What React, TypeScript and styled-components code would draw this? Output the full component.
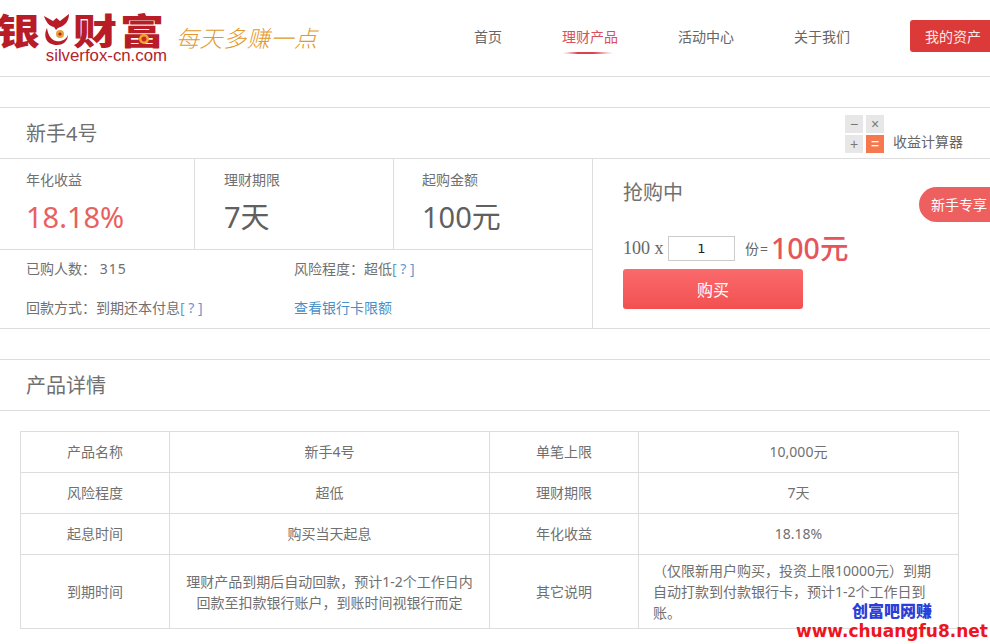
import styled, { createGlobalStyle } from "styled-components";

const sans = `"Noto Sans", "Noto Sans CJK SC", sans-serif`;

const GlobalStyle = createGlobalStyle`
  html, body {
    margin: 0;
    height: 644px;
    overflow: hidden;
    background: #fff;
    font-family: ${sans};
    color: #707070;
  }
`;

const Page = styled.div`
  position: relative;
  width: 990px;
  height: 644px;
  overflow: hidden;
`;

const Header = styled.header`
  display: flex;
  align-items: flex-start;
  height: 76px;
  border-bottom: 1px solid #ddd;
  overflow: hidden;
`;

const Logo = styled.div`
  position: relative;
  flex: none;
  width: 167px;
  margin-top: 10px;
  text-align: right;
`;

const LogoMark = styled.div`
  display: flex;
  align-items: center;
  gap: 3px;
  height: 38px;
  margin-left: -4px;
  color: #b81c26;
`;

const LogoChar = styled.span`
  display: block;
  width: 44px;
  font: 900 44px/38px "Noto Sans CJK SC", sans-serif;
  transform: scaleY(0.82);
`;

const LogoCoin = styled.span`
  position: absolute;
  left: 139px;
  top: 24px;
  width: 10px;
  height: 10px;
  border-radius: 50%;
  background: radial-gradient(circle, #c8282a 0 2px, #f0a52e 3px);
`;

const LogoDomain = styled.div`
  font: 16.8px/15px "Liberation Sans", sans-serif;
  color: #b3232c;
`;

const Slogan = styled.div`
  flex: none;
  margin: 23px 0 0 9px;
  width: 142px;
  font: italic 300 23px/28px "Noto Sans CJK SC", sans-serif;
  letter-spacing: 0.6px;
  color: #e3992a;
  white-space: nowrap;
`;

const Nav = styled.nav`
  display: flex;
  flex: none;
  margin-left: 156px;
  gap: 60px;
  padding-top: 27px;
`;

const NavItem = styled.a<{ $active?: boolean }>`
  position: relative;
  font-size: 14px;
  line-height: 20px;
  white-space: nowrap;
  color: ${(p) => (p.$active ? "#d9505a" : "#666")};
  ${(p) =>
    p.$active &&
    `&::after {
      content: "";
      position: absolute;
      left: 0;
      right: 4px;
      top: 25px;
      height: 2px;
      border-radius: 50%;
      background: linear-gradient(90deg, transparent, #d9434a 30%, #d9434a 60%, transparent);
    }`}
`;

const AssetButton = styled.a`
  flex: none;
  margin: 20px 0 0 60px;
  width: 80px;
  height: 32px;
  box-sizing: border-box;
  padding-left: 15px;
  border-radius: 3px 0 0 3px;
  background: #dc3a38;
  color: #fbecea;
  font-size: 14px;
  line-height: 34px;
  white-space: nowrap;
`;

const TitleBar = styled.div`
  display: flex;
  align-items: flex-start;
  justify-content: space-between;
  height: 50px;
  margin-top: 30px;
  border-top: 1px solid #ddd;
  border-bottom: 1px solid #ddd;
  padding: 0 27px 0 26px;
`;

const SectionTitle = styled.h1`
  margin: 0;
  font-size: 20px;
  line-height: 52px;
  font-weight: 400;
  color: #707070;
`;

const Calculator = styled.div`
  display: flex;
  align-items: flex-end;
  gap: 9px;
  margin-top: 7px;
`;

const CalcKeys = styled.div`
  display: grid;
  grid-template-columns: 18px 18px;
  grid-auto-rows: 18px;
  gap: 2px 3px;
`;

const CalcKey = styled.span<{ $on?: boolean }>`
  display: flex;
  align-items: center;
  justify-content: center;
  background: ${(p) => (p.$on ? "#f5784f" : "#e7e7e7")};
  color: ${(p) => (p.$on ? "#fff" : "#777")};
  font: 14px/18px "Liberation Sans", sans-serif;
`;

const CalcLabel = styled.span`
  font-size: 14px;
  line-height: 20px;
  padding-bottom: 1px;
  color: #666;
`;

const Main = styled.section`
  display: flex;
  height: 169px;
  border-bottom: 1px solid #ddd;
`;

const Info = styled.div`
  width: 592px;
  border-right: 1px solid #ddd;
`;

const Stats = styled.div`
  display: flex;
  height: 90px;
  border-bottom: 1px solid #ddd;
`;

const Stat = styled.div<{ $width: number; $pad: number }>`
  box-sizing: border-box;
  width: ${(p) => p.$width}px;
  padding: 11px 0 0 ${(p) => p.$pad}px;
  & + & {
    border-left: 1px solid #ddd;
  }
`;

const StatLabel = styled.div`
  font-size: 14px;
  line-height: 20px;
  color: #707070;
`;

const StatValue = styled.div<{ $hot?: boolean }>`
  margin-top: 8px;
  font-size: 29px;
  line-height: 38px;
  color: ${(p) => (p.$hot ? "#e8605f" : "#606060")};
`;

const Facts = styled.div`
  display: grid;
  grid-template-columns: 268px 1fr;
  grid-auto-rows: 39px;
  margin-top: -1px;
  padding-left: 26px;
`;

const Fact = styled.div`
  font-size: 14px;
  line-height: 39px;
  white-space: nowrap;
  color: #707070;
`;

const Count = styled.span`
  letter-spacing: 1px;
`;

const Hint = styled.span`
  color: #5b9bd0;
`;

const BankLink = styled.a`
  color: #4a90c8;
`;

const Buy = styled.div`
  position: relative;
  flex: 1;
  padding: 19px 0 0 30px;
`;

const BuyTitle = styled.div`
  font-size: 20px;
  line-height: 30px;
  color: #707070;
`;

const BuyRow = styled.div`
  display: flex;
  align-items: center;
  height: 40px;
  margin-top: 20px;
  color: #666;
`;

const Multiplier = styled.span`
  font: 18px/26px "Liberation Serif", serif;
  width: 45px;
`;

const Quantity = styled.input`
  box-sizing: border-box;
  width: 67px;
  height: 25px;
  border: 1px solid #ccc;
  padding: 0;
  text-align: center;
  font: 13px "DejaVu Sans", sans-serif;
  color: #222;
  outline: none;
`;

const Shares = styled.span`
  margin: 0 2px 0 10px;
  font-size: 14px;
  letter-spacing: 1px;
`;

const Total = styled.span`
  font-size: 28.5px;
  line-height: 38px;
  color: #e4555c;
  font-weight: 500;
`;

const BuyButton = styled.button`
  display: block;
  width: 180px;
  height: 40px;
  margin-top: 1px;
  border: 0;
  border-radius: 3px;
  background: linear-gradient(#fb6a6c, #f25051);
  color: #fff;
  font-family: ${sans};
  font-size: 16px;
`;

const NewbieTag = styled.div`
  position: absolute;
  top: 28px;
  right: 0;
  width: 71px;
  height: 35px;
  box-sizing: border-box;
  padding-left: 12px;
  border-radius: 18px 0 0 18px;
  background: #ee5f5f;
  color: #fff;
  font-size: 14px;
  line-height: 36px;
  white-space: nowrap;
`;

const DetailTitle = styled.div`
  height: 50px;
  margin-top: 30px;
  padding-left: 26px;
  border-top: 1px solid #ddd;
  border-bottom: 1px solid #ddd;
`;

const Table = styled.table`
  border-collapse: collapse;
  table-layout: fixed;
  width: 939px;
  margin: 20px 0 0 20px;
  font-size: 14px;
  color: #707070;
`;

const Cell = styled.td`
  border: 1px solid #ddd;
  text-align: center;
  height: 41px;
  padding: 0 0 1px;
  box-sizing: border-box;
  line-height: 21px;
`;

const LongCell = styled(Cell)`
  height: 74px;
  padding: 0 14px;
`;

const LeftCell = styled(LongCell)`
  text-align: left;
  padding: 0 24px 0 14px;
`;

const Watermark = styled.div`
  position: absolute;
  right: 0;
  top: 600px;
  width: 200px;
  text-align: right;
  white-space: nowrap;
`;

const WatermarkCn = styled.div`
  margin-right: 58px;
  font: 900 16px/20px "Noto Sans CJK SC", sans-serif;
  color: #2a3fd8;
`;

const WatermarkUrl = styled.div`
  margin-top: 2px;
  padding-right: 2px;
  font: 700 17px/19px "DejaVu Sans", sans-serif;
  color: #ee1520;
`;

const FoxIcon = () => (
  <svg width="27" height="33" viewBox="0 0 27 33" fill="none">
    <path d="M1 3 L10 8 L13.5 5 L17 8 L26 1 C26 8 22 13 15 15 L13 17 L11 14 C6 13 3 9 1 3Z" fill="#b81c26" />
    <path d="M4 15 C0 23 3 32 14 32 C21 32 25 27 25 22 C23 27 18 29 13 28 C8 27 5 22 4 15Z" fill="#b81c26" />
    <circle cx="17" cy="21" r="4" fill="#e9a13a" />
    <circle cx="17" cy="21" r="1.6" fill="#b81c26" />
  </svg>
);

export default function App() {
  return (
    <Page>
      <GlobalStyle />
      <Header>
        <Logo>
          <LogoMark>
            <LogoChar>银</LogoChar>
            <FoxIcon />
            <LogoChar>财</LogoChar>
            <LogoChar>富</LogoChar>
          </LogoMark>
          <LogoCoin />
          <LogoDomain>silverfox-cn.com</LogoDomain>
        </Logo>
        <Slogan>每天多赚一点</Slogan>
        <Nav>
          <NavItem>首页</NavItem>
          <NavItem $active>理财产品</NavItem>
          <NavItem>活动中心</NavItem>
          <NavItem>关于我们</NavItem>
        </Nav>
        <AssetButton>我的资产</AssetButton>
      </Header>

      <TitleBar>
        <SectionTitle>新手4号</SectionTitle>
        <Calculator>
          <CalcKeys>
            <CalcKey>−</CalcKey>
            <CalcKey>×</CalcKey>
            <CalcKey>+</CalcKey>
            <CalcKey $on>=</CalcKey>
          </CalcKeys>
          <CalcLabel>收益计算器</CalcLabel>
        </Calculator>
      </TitleBar>

      <Main>
        <Info>
          <Stats>
            <Stat $width={194} $pad={26}>
              <StatLabel>年化收益</StatLabel>
              <StatValue $hot>18.18%</StatValue>
            </Stat>
            <Stat $width={199} $pad={29}>
              <StatLabel>理财期限</StatLabel>
              <StatValue>7天</StatValue>
            </Stat>
            <Stat $width={199} $pad={28}>
              <StatLabel>起购金额</StatLabel>
              <StatValue>100元</StatValue>
            </Stat>
          </Stats>
          <Facts>
            <Fact>已购人数： <Count>315</Count></Fact>
            <Fact>风险程度：超低<Hint>[ ? ]</Hint></Fact>
            <Fact>回款方式：到期还本付息<Hint>[ ? ]</Hint></Fact>
            <Fact><BankLink>查看银行卡限额</BankLink></Fact>
          </Facts>
        </Info>
        <Buy>
          <BuyTitle>抢购中</BuyTitle>
          <BuyRow>
            <Multiplier>100 x</Multiplier>
            <Quantity defaultValue="1" />
            <Shares>份=</Shares>
            <Total>100元</Total>
          </BuyRow>
          <BuyButton>购买</BuyButton>
          <NewbieTag>新手专享</NewbieTag>
        </Buy>
      </Main>

      <DetailTitle>
        <SectionTitle>产品详情</SectionTitle>
      </DetailTitle>

      <Table>
        <colgroup>
          <col width="149" />
          <col width="320" />
          <col width="149" />
          <col width="320" />
        </colgroup>
        <tbody>
          <tr>
            <Cell>产品名称</Cell>
            <Cell>新手4号</Cell>
            <Cell>单笔上限</Cell>
            <Cell>10,000元</Cell>
          </tr>
          <tr>
            <Cell>风险程度</Cell>
            <Cell>超低</Cell>
            <Cell>理财期限</Cell>
            <Cell>7天</Cell>
          </tr>
          <tr>
            <Cell>起息时间</Cell>
            <Cell>购买当天起息</Cell>
            <Cell>年化收益</Cell>
            <Cell>18.18%</Cell>
          </tr>
          <tr>
            <LongCell>到期时间</LongCell>
            <LongCell>理财产品到期后自动回款，预计1-2个工作日内回款至扣款银行账户，到账时间视银行而定</LongCell>
            <LongCell>其它说明</LongCell>
            <LeftCell>（仅限新用户购买，投资上限10000元）到期自动打款到付款银行卡，预计1-2个工作日到账。</LeftCell>
          </tr>
        </tbody>
      </Table>

      <Watermark>
        <WatermarkCn>创富吧网赚</WatermarkCn>
        <WatermarkUrl>www.chuangfu8.net</WatermarkUrl>
      </Watermark>
    </Page>
  );
}
